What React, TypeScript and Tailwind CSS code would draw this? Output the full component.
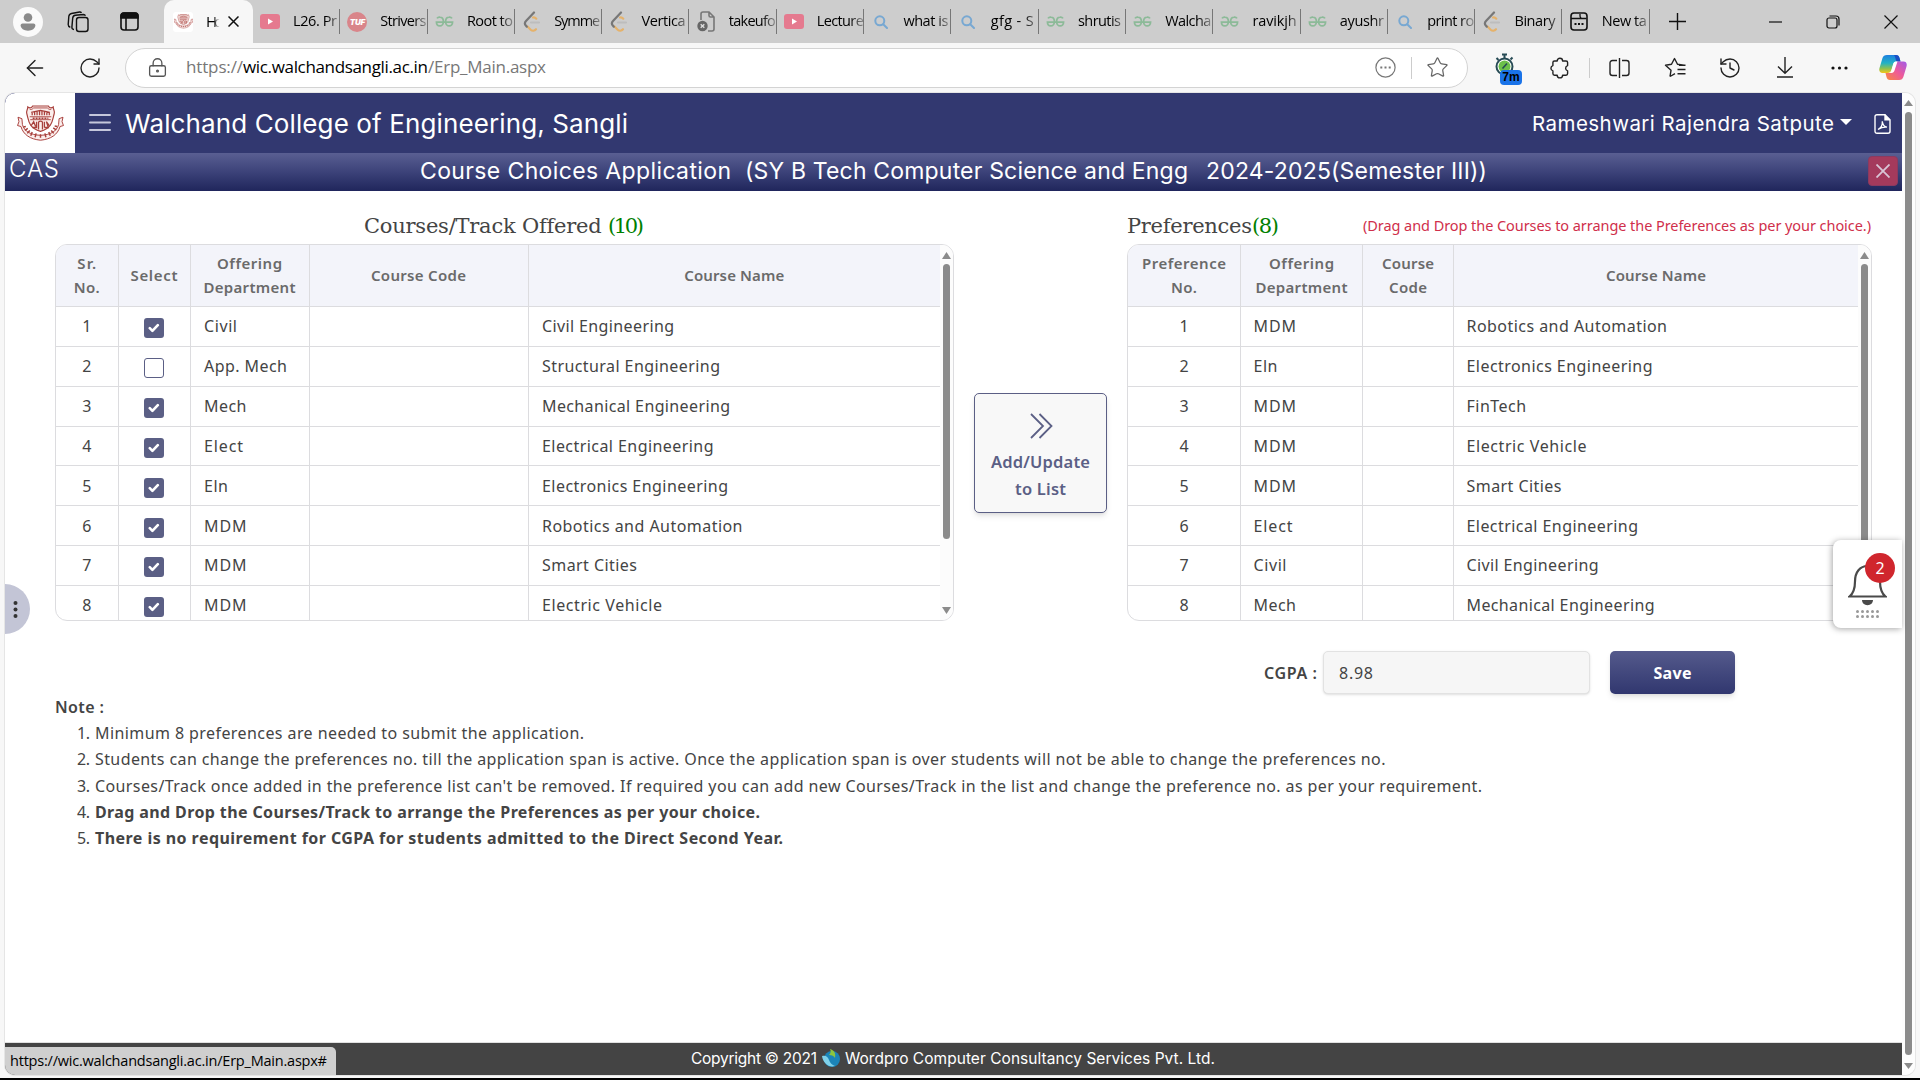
import { useLayoutEffect, useRef, useState } from "react";
import type { ReactNode } from "react";
import { ArrowLeft, RotateCw, LockKeyhole, Star, History } from "lucide-react";

/* A single line of text whose tracking is adjusted to fill a given measure. */
function Line({ w, className = "", children }: { w: number; className?: string; children: string }) {
  const ref = useRef<HTMLSpanElement>(null);
  const [tracking, setTracking] = useState(0);
  useLayoutEffect(() => {
    const el = ref.current;
    if (!el) return;
    el.style.letterSpacing = "0px";
    const natural = el.getBoundingClientRect().width;
    const next = (w - natural) / Math.max(1, children.length - 1);
    el.style.letterSpacing = `${next}px`;
    setTracking(next);
  }, [w, children]);
  return (
    <span className={`inline-block text-left whitespace-pre ${className}`} style={{ width: w }}>
      <span ref={ref} style={{ letterSpacing: tracking }}>{children}</span>
    </span>
  );
}

const SEGOE = "font-['Open_Sans','Noto_Sans',sans-serif]";
const UBUNTU = "font-['Noto_Sans',sans-serif]";
const POPPINS = "font-['Inter',sans-serif]";
const SLAB = "font-['DejaVu_Serif',serif]";

function YouTube() {
  return (
    <svg width="20" height="15" viewBox="0 0 20 15">
      <rect width="20" height="15" rx="3" fill="#e57a8f" />
      <path d="M8 4.5v6l5-3z" fill="#fff" />
    </svg>
  );
}
function Gfg() {
  return (
    <svg width="19" height="11" viewBox="0 0 20 12" fill="none" stroke="#8cba98" strokeWidth="1.9">
      <path d="M1.800 2.600C2.600 1.400 4 1 5.200 1.200 7.400 1.500 8.800 3.300 8.800 6S7 10.900 4.900 10.900 1.200 9.200 1.200 6.600h17.600c0 2.600-1.600 4.300-3.700 4.300S11.200 8.700 11.200 6s1.400-4.500 3.600-4.800c1.200-.2 2.600.2 3.400 1.400" />
    </svg>
  );
}
function LeetCode() {
  return (
    <svg width="18" height="21" viewBox="0 0 18 21" fill="none" strokeWidth="2.200" strokeLinecap="round">
      <path d="M8 11.500h8" stroke="#bdbdbd" />
      <path d="M4.500 15.500l3.200 3.200c1.700 1.500 3.800 1.200 5.300-.5M10 6.500c1.200-.4 2.300.1 3.300 1.200" stroke="#e5b26b" />
      <path d="M11 1.500L3 10c-1.300 1.400-1.300 3.400 0 4.800l.8.900" stroke="#777" />
    </svg>
  );
}
function SearchIcon() {
  return (
    <svg width="14" height="14" viewBox="0 0 14 14" fill="none" stroke="#78a8d2" strokeWidth="2" strokeLinecap="round">
      <circle cx="5.800" cy="5.800" r="4.500" />
      <path d="M9.200 9.200L13 13" />
    </svg>
  );
}
function FileX() {
  return (
    <svg width="19" height="21" viewBox="0 0 19 21" fill="none" stroke="#777" strokeWidth="1.600">
      <path d="M4 9V3c0-1.200.8-2 2-2h6l5 5v12c0 1.200-.8 2-2 2h-4M12 1v3.500C12 5.500 12.600 6 13.500 6H17" />
      <circle cx="5.500" cy="15" r="5.200" fill="#666" stroke="none" />
      <path d="M3.700 13.200l3.600 3.600m0-3.600l-3.600 3.600" stroke="#ddd" strokeWidth="1.400" />
    </svg>
  );
}
function Tuf() {
  return (
    <div className="flex size-5 items-center justify-center rounded-full bg-[#d9858a]">
      <span className="font-['Inter',sans-serif] text-[8px] font-black tracking-[-0.3px] text-white italic">TUF</span>
    </div>
  );
}
function NewTabIcon() {
  return (
    <svg width="18" height="19" viewBox="0 0 18 19" fill="none" stroke="#111" strokeWidth="1.600">
      <rect x="1" y="1" width="16" height="17" rx="3" />
      <path d="M1 6.500h15.500M10 2v1.500c0 2 .8 3 2.500 3" strokeWidth="1.300" />
      <path d="M4.500 12h2M8 12h2M11.500 12h2" strokeWidth="2" />
    </svg>
  );
}
function Crest({ size }: { size: number }) {
  return (
    <svg width={size} height={size * 0.77} viewBox="0 0 48 37" fill="none" stroke="#a8403c" strokeWidth="1.200">
      <path d="M11 2c2 1.500 4 1 5-1h16c1 2 3 2.500 5 1 0 3 2 4 1 7-2 6-1 14-14 18C11 23 12 15 10 9 9 6 11 5 11 2z" fill="#fbeeec" />
      <path d="M13 4.500c1.500.3 3-.3 4-1.500h14c1 1.200 2.500 1.800 4 1.500M13 12h22M13.500 15h21" strokeWidth=".9" />
      <path d="M15.500 10.500V7.500m2.500 3v-3m2.500 3V6.500m2.500 4v-4m2.500 4v-4m2.500 4V7m2.500 3.500v-3m2.500 3v-3M14.500 7.500l9.500-2 9.500 2" strokeWidth="1.300" />
      <path d="M16 13.500h16" strokeWidth="1.600" strokeDasharray="2 1" />
      <path d="M14.500 21l2.500-4 2 5m-3 1h4v-6m2 8v-7c0-2 4-2 4 0v7m2-2v-6m0 6h4l-2-6 3 4" strokeWidth="1.300" />
      <path d="M1 12.500l4 1.500.5 6c2 7 8 10.500 18.500 11 10.500-.5 16.500-4 18.500-11l.5-6 4-1.500-1 4.500 1.500 4-3.500 1c-2.500 8.500-9.500 13-20 14-10.500-1-17.500-5.500-20-14l-3.500-1L2 17z" fill="#fbeeec" strokeWidth="1" />
      <path d="M6.500 22.500l2.500-.5m-1 4l3-2m-.5 5l2.500-3m1 5.500l1.500-4m3 5.500l1-4m4.500 4.500v-3.500m5.500 3l-1-4m5.500 2.500l-1.500-4m5 1.500l-2.500-3m5-.5l-3-2m4-1.500l-2.500-.5" strokeWidth="1.500" />
    </svg>
  );
}
function Profile() {
  return (
    <div className="flex size-[30px] items-center justify-center rounded-full bg-[#fafafa]">
      <svg width="16" height="18" viewBox="0 0 16 18" fill="#8a8a8a">
        <circle cx="8" cy="4.500" r="4.300" />
        <path d="M2.500 10.500h11c1 0 1.800.8 1.800 1.800 0 3.200-3 5.400-7.300 5.400S.7 15.500.7 12.300c0-1 .8-1.800 1.800-1.800z" />
      </svg>
    </div>
  );
}

const TABS: { icon: ReactNode; label: string; w: number }[] = [
  { icon: <YouTube />, label: "L26. Pr", w: 44 },
  { icon: <Tuf />, label: "Strivers", w: 46 },
  { icon: <Gfg />, label: "Root to", w: 46 },
  { icon: <LeetCode />, label: "Symme", w: 46 },
  { icon: <LeetCode />, label: "Vertica", w: 44 },
  { icon: <FileX />, label: "takeufo", w: 47 },
  { icon: <YouTube />, label: "Lecture", w: 47 },
  { icon: <SearchIcon />, label: "what is", w: 45 },
  { icon: <SearchIcon />, label: "gfg - S", w: 43 },
  { icon: <Gfg />, label: "shrutis", w: 43 },
  { icon: <Gfg />, label: "Walcha", w: 46 },
  { icon: <Gfg />, label: "ravikjh", w: 44 },
  { icon: <Gfg />, label: "ayushr", w: 44 },
  { icon: <SearchIcon />, label: "print ro", w: 47 },
  { icon: <LeetCode />, label: "Binary", w: 41 },
  { icon: <NewTabIcon />, label: "New ta", w: 45 },
];

function TabStrip() {
  return (
    <div className="relative flex h-[43px] items-center bg-[#cdcdcd]">
      <div className="flex w-[164px] items-center pl-[13px]">
        <Profile />
        <svg className="ml-[24px]" width="22" height="22" viewBox="0 0 22 22" fill="none" stroke="#111" strokeWidth="1.400">
          <rect x="9.500" y="6.500" width="11.500" height="14" rx="2.500" />
          <path d="M7 18.500c-1.400-.1-2.200-1-2.100-2.400l.8-9C5.900 5.500 6.800 4.500 8.300 4.300l8.200-.8c1 0 1.600.4 1.900 1.200" />
          <path d="M3.300 16.200C2 15.900 1.200 15 1.200 13.500l.6-8c.2-1.700 1-2.700 2.700-3L12.500 1c.9-.1 1.600.2 1.900 1" />
        </svg>
        <svg className="ml-[31px]" width="19" height="19" viewBox="0 0 19 19" fill="none" stroke="#111" strokeWidth="1.600">
          <rect x="1" y="1" width="17" height="17" rx="3" />
          <path d="M1 6V4a3 3 0 013-3h11a3 3 0 013 3v2z" fill="#111" />
          <path d="M6 6v12" />
        </svg>
      </div>
      <div className="flex h-[43px] w-[89px] items-center rounded-t-[10px] bg-[#f7f7f7] pl-[9px]">
        <div className="flex size-[20px] items-center justify-center rounded-[3px] bg-white"><Crest size={19} /></div>
        <div className={`-mt-[2px] ml-[13px] w-[17px] text-[15px] leading-[22px] text-black mask-r-from-45% mask-r-to-80% ${SEGOE}`}><Line w={17}>Ho</Line></div>
        <svg className="ml-[5px]" width="11" height="11" viewBox="0 0 11 11" stroke="#111" strokeWidth="1.500"><path d="M.5.5l10 10m0-10l-10 10" /></svg>
      </div>
      {TABS.map((t, i) => (
        <div key={i} className="flex h-[25px] w-[87.300px] items-center border-r border-[#777] pl-[7px]">
          <div className="flex w-[20px] items-center justify-center">{t.icon}</div>
          <div className={`-mt-[2px] ml-[13px] w-[47px] shrink-0 text-[14.500px] leading-[24px] text-black mask-r-from-70% mask-r-to-110% ${SEGOE}`}>
            <Line w={t.w}>{t.label}</Line>
          </div>
        </div>
      ))}
      <svg className="ml-[19px]" width="17" height="17" viewBox="0 0 17 17" stroke="#111" strokeWidth="1.400"><path d="M8.500 0v17M0 8.500h17" /></svg>
      <div className="ml-auto flex items-center pr-[22px]">
        <svg width="13" height="2" viewBox="0 0 13 2"><path d="M0 1h13" stroke="#111" strokeWidth="1.200" /></svg>
        <svg className="ml-[44px]" width="14" height="14" viewBox="0 0 14 14" fill="none" stroke="#111" strokeWidth="1.200">
          <rect x="1" y="3" width="10" height="10" rx="2" />
          <path d="M3.500 1H10c1.700 0 3 1.300 3 3v6.500" />
        </svg>
        <svg className="ml-[44px]" width="14" height="14" viewBox="0 0 14 14" stroke="#111" strokeWidth="1.200"><path d="M.5.5l13 13m0-13l-13 13" /></svg>
      </div>
    </div>
  );
}

function Copilot() {
  return (
    <svg width="28" height="27" viewBox="0 0 28 27">
      <defs>
        <linearGradient id="cpA" x1="0" y1="0" x2="0" y2="1">
          <stop offset="0" stopColor="#1d7fe0" /><stop offset=".45" stopColor="#22b2c5" /><stop offset=".75" stopColor="#8cc152" /><stop offset="1" stopColor="#f5c518" />
        </linearGradient>
        <linearGradient id="cpB" x1="1" y1="0" x2="0" y2="1">
          <stop offset="0" stopColor="#a05be8" /><stop offset=".5" stopColor="#ee5a9a" /><stop offset="1" stopColor="#f98a3c" />
        </linearGradient>
      </defs>
      <path d="M8 1h9c2 0 3 1 3.500 3l1 3.500h-4c-2 0-3 1-3.500 3l-1.500 5c-.6 2.300-1.500 3.500-4 3.500H3.500C.8 19-.3 17 .5 14L3.500 4C4.200 2 5.500 1 8 1z" fill="url(#cpA)" />
      <path d="M15 1h2c2 0 3 1 3.500 3l1 3.500h-4c-1-2-1-4.500-2.500-6.500z" fill="#1b4fc4" />
      <path d="M20 26h-9c-2 0-3-1-3.500-3l-1-4h3c2.500 0 3.400-1.200 4-3.500l1.500-5c.5-2 1.500-3 3.500-3h6c2.700 0 3.800 2 3 5l-3 10c-.7 2.500-2 3.500-4.500 3.500z" fill="url(#cpB)" />
      <path d="M12.500 16.500l2-7c.4-1.300 1.200-2 2.500-2h1.500l-3 9c-.5 1.500-1.500 2.500-3 2.500H9.500c1.800-.2 2.500-1 3-2.500z" fill="#fff" />
    </svg>
  );
}

function Toolbar() {
  return (
    <div className="flex h-[50px] items-center bg-[#f7f7f7] pb-[1px]">
      <ArrowLeft className="ml-[22px]" size={26} strokeWidth={1.300} color="#222" />
      <RotateCw className="ml-[30px]" size={24} strokeWidth={1.400} color="#222" />
      <div className="ml-[23px] flex h-[40px] w-[1343px] items-center rounded-full border border-[#d3d3d3] bg-white">
        <LockKeyhole className="ml-[21px]" size={21} strokeWidth={1.500} color="#555" />
        <div className={`-mt-[1px] ml-[18px] flex text-[17px] leading-[24px] ${SEGOE}`}>
          <Line w={57} className="text-[#777]">https://</Line>
          <Line w={185} className="text-black">wic.walchandsangli.ac.in</Line>
          <Line w={118} className="text-[#777]">/Erp_Main.aspx</Line>
        </div>
        <svg className="ml-auto" width="21" height="21" viewBox="0 0 21 21" fill="none" stroke="#777" strokeWidth="1.200">
          <circle cx="10.500" cy="10.500" r="9.600" />
          <path d="M5.300 10.500h2m2.200 0h2m2.200 0h2" strokeWidth="2" />
        </svg>
        <div className="ml-[15px] h-[22px] w-px bg-[#ccc]" />
        <Star className="mr-[18px] ml-[14px]" size={23} strokeWidth={1.300} color="#666" />
      </div>
      <div className="relative ml-[26px] h-[30px] w-[28px]">
        <svg width="22" height="24" viewBox="0 0 22 24" fill="none" stroke="#274b55" strokeWidth="2">
          <circle cx="10.500" cy="13.500" r="8" fill="#fff" />
          <circle cx="10.500" cy="13.500" r="6" fill="#6cc04a" stroke="none" />
          <path d="M8 1.500h5M10.500 2v3M2.500 5l2 2m12-.5l2-2" />
          <path d="M8.500 15.500l4.500-5" strokeWidth="1.600" />
        </svg>
        <div className="absolute top-[17px] left-[6px] flex h-[15px] w-[22px] items-center justify-center rounded-[4px] bg-[#1a73e8] font-['Liberation_Sans',sans-serif] text-[12px] font-bold text-black">7m</div>
      </div>
      <svg className="ml-[27px]" width="22" height="22" viewBox="0 0 22 22" fill="none" stroke="#222" strokeWidth="1.400" strokeLinejoin="round">
        <path d="M8.200 4a2.700 2.700 0 015.400 0H17c1 0 1.600.6 1.600 1.600V8.600a2.700 2.700 0 000 5.200v2.800c0 1-.6 1.600-1.600 1.600h-3.400a2.700 2.700 0 01-5.400 0H5.500c-1 0-1.600-.6-1.600-1.600v-2.800a2.700 2.700 0 010-5.200v-3C3.900 4.600 4.500 4 5.500 4z" />
      </svg>
      <div className="ml-[18px] h-[20px] w-px bg-[#ccc]" />
      <svg className="ml-[19px]" width="21" height="20" viewBox="0 0 21 20" fill="none" stroke="#222" strokeWidth="1.400">
        <path d="M8 2.500H3.500C2 2.500 1 3.500 1 5v10c0 1.500 1 2.500 2.500 2.500H8M13 2.500h4.500C19 2.500 20 3.500 20 5v10c0 1.500-1 2.500-2.500 2.500H13M10.500 0v20" />
      </svg>
      <svg className="ml-[34px]" width="22" height="21" viewBox="0 0 22 21" fill="none" stroke="#222" strokeWidth="1.400" strokeLinejoin="round">
        <path d="M6 19.500l1-6.200L1.500 8.200l6-.9L10.500 1.500l3 5.800 6.500.9M13.500 12.500h8M15 8.200h6.500M13.500 16.800h8M6 19.500l5-2.800" />
      </svg>
      <History className="ml-[32px]" size={24} strokeWidth={1.400} color="#222" />
      <svg className="ml-[35px]" width="16" height="21" viewBox="0 0 16 21" fill="none" stroke="#222" strokeWidth="1.400"><path d="M8 0v16M1 9.500L8 16.200l7-6.700M0 20h16" /></svg>
      <svg className="ml-[38px]" width="17" height="4" viewBox="0 0 17 4" fill="#111"><circle cx="2" cy="2" r="1.600" /><circle cx="8.500" cy="2" r="1.600" /><circle cx="15" cy="2" r="1.600" /></svg>
      <div className="ml-[31px]"><Copilot /></div>
    </div>
  );
}

const HEAD = `flex flex-col items-center justify-center border-r border-[#dcdcdf] pb-[2px] leading-[24px] text-[15px] font-semibold text-[#6a6a6a] ${UBUNTU}`;
const CELL = "flex items-center border-r border-[#dcdcdf]";

const OFFERED: [string, number, string, number, boolean][] = [
  ["Civil", 33, "Civil Engineering", 132, true],
  ["App. Mech", 83, "Structural Engineering", 178, false],
  ["Mech", 42.5, "Mechanical Engineering", 188, true],
  ["Elect", 39, "Electrical Engineering", 171.5, true],
  ["Eln", 24, "Electronics Engineering", 186, true],
  ["MDM", 42.5, "Robotics and Automation", 200.5, true],
  ["MDM", 42.5, "Smart Cities", 95, true],
  ["MDM", 42.5, "Electric Vehicle", 120, true],
];
const PREFS: [string, number, string, number][] = [
  ["MDM", 42.5, "Robotics and Automation", 200.5],
  ["Eln", 24, "Electronics Engineering", 186],
  ["MDM", 42.5, "FinTech", 59.6],
  ["MDM", 42.5, "Electric Vehicle", 120],
  ["MDM", 42.5, "Smart Cities", 95],
  ["Elect", 39, "Electrical Engineering", 171.5],
  ["Civil", 33, "Civil Engineering", 132],
  ["Mech", 42.5, "Mechanical Engineering", 188],
];

function Scroll({ thumb }: { thumb: string }) {
  return (
    <div className="flex w-[13px] shrink-0 flex-col items-center bg-[#fcfcfc] pt-[7px]">
      <svg width="9" height="7" viewBox="0 0 9 7" fill="#8b8b8b"><path d="M4.500 0L9 7H0z" /></svg>
      <div className={`mt-[5px] w-[7px] rounded-full bg-[#8b8b8b] ${thumb}`} />
      <svg className="mt-auto mb-[6px]" width="9" height="7" viewBox="0 0 9 7" fill="#8b8b8b"><path d="M4.500 7L9 0H0z" /></svg>
    </div>
  );
}

function OfferedTable() {
  const cols = "grid grid-cols-[62.500px_72px_119px_219px_1fr]";
  return (
    <div className="flex h-[377px] w-[899px] overflow-hidden rounded-[12px] border border-[#dcdcdf] bg-white">
      <div className="flex-1">
        <div className={`${cols} h-[62px] border-b border-[#dcdcdf] bg-[#f3f4fa]`}>
          <div className={HEAD}><Line w={19}>Sr.</Line><Line w={26}>No.</Line></div>
          <div className={HEAD}><Line w={47}>Select</Line></div>
          <div className={HEAD}><Line w={65}>Offering</Line><Line w={92}>Department</Line></div>
          <div className={HEAD}><Line w={95}>Course Code</Line></div>
          <div className={`${HEAD} border-r-0`}><Line w={100}>Course Name</Line></div>
        </div>
        {OFFERED.map(([d, dw, n, nw, on], i) => (
          <div key={i} className={`${cols} h-[39.850px] border-b border-[#dcdcdf] text-[16px] text-[#444] ${UBUNTU}`}>
            <div className={`${CELL} justify-center`}>{i + 1}</div>
            <div className={`${CELL} justify-center pt-[4px]`}>
              {on ? (
                <div className="flex size-[20px] items-center justify-center rounded-[3px] bg-[#5b5f85]">
                  <svg width="12" height="10" viewBox="0 0 12 10" fill="none" stroke="#fff" strokeWidth="2.600" strokeLinecap="round" strokeLinejoin="round"><path d="M1.800 5.200l2.600 2.600 5.400-5.600" /></svg>
                </div>
              ) : (
                <div className="size-[20px] rounded-[3px] border border-[#5b5f85] bg-white" />
              )}
            </div>
            <div className={`${CELL} pl-[13.500px]`}><Line w={dw}>{d}</Line></div>
            <div className={CELL} />
            <div className="flex items-center pl-[13.500px]"><Line w={nw}>{n}</Line></div>
          </div>
        ))}
      </div>
      <Scroll thumb="h-[275px]" />
    </div>
  );
}

function PreferenceTable() {
  const cols = "grid grid-cols-[113px_122px_91px_1fr]";
  return (
    <div className="flex h-[377px] w-[745px] overflow-hidden rounded-[12px] border border-[#dcdcdf] bg-white">
      <div className="flex-1">
        <div className={`${cols} h-[62px] border-b border-[#dcdcdf] bg-[#f3f4fa]`}>
          <div className={HEAD}><Line w={84}>Preference</Line><Line w={26}>No.</Line></div>
          <div className={HEAD}><Line w={65}>Offering</Line><Line w={92}>Department</Line></div>
          <div className={HEAD}><Line w={52}>Course</Line><Line w={38}>Code</Line></div>
          <div className={`${HEAD} border-r-0`}><Line w={100}>Course Name</Line></div>
        </div>
        {PREFS.map(([d, dw, n, nw], i) => (
          <div key={i} className={`${cols} h-[39.850px] border-b border-[#dcdcdf] text-[16px] text-[#444] ${UBUNTU}`}>
            <div className={`${CELL} justify-center`}>{i + 1}</div>
            <div className={`${CELL} pl-[12.500px]`}><Line w={dw}>{d}</Line></div>
            <div className={CELL} />
            <div className="flex items-center pl-[12.500px]"><Line w={nw}>{n}</Line></div>
          </div>
        ))}
      </div>
      <Scroll thumb="h-[342px]" />
    </div>
  );
}

const NOTES: [string, number, boolean][] = [
  ["Minimum 8 preferences are needed to submit the application.", 489, false],
  ["Students can change the preferences no. till the application span is active. Once the application span is over students will not be able to change the preferences no.", 1290.5, false],
  ["Courses/Track once added in the preference list can't be removed. If required you can add new Courses/Track in the list and change the preference no. as per your requirement.", 1387, false],
  ["Drag and Drop the Courses/Track to arrange the Preferences as per your choice.", 665, true],
  ["There is no requirement for CGPA for students admitted to the Direct Second Year.", 688, true],
];

function Header() {
  return (
    <>
      <div className="flex h-[60px] items-center bg-[#323870]">
        <div className="flex h-[60px] w-[70px] items-center justify-center rounded-tl-[10px] bg-white"><Crest size={47} /></div>
        <svg className="ml-[14px]" width="22" height="20" viewBox="0 0 22 20" stroke="#c5c7dc" strokeWidth="2" strokeLinecap="round"><path d="M1 2h20M1 9.500h20M1 17h20" /></svg>
        <div className={`mt-[2px] ml-[14px] text-[26px] leading-[40px] text-white ${POPPINS}`}><Line w={503}>Walchand College of Engineering, Sangli</Line></div>
        <div className={`mt-[2px] ml-auto text-[20.500px] leading-[30px] text-white ${POPPINS}`}><Line w={302}>Rameshwari Rajendra Satpute</Line></div>
        <svg className="mr-[22px] ml-[6px] -mt-[2px]" width="12" height="6" viewBox="0 0 12 6" fill="#fff"><path d="M0 0h12L6 6z" /></svg>
        <svg className="mr-[11px] mt-[2px]" width="17" height="20" viewBox="0 0 17 20" fill="none" stroke="#fff" strokeWidth="1.400">
          <path d="M3 .8h8l5 5v11.400c0 1.200-.8 2-2 2H3c-1.200 0-2-.8-2-2V2.800c0-1.200.8-2 2-2z" />
          <path d="M11 .8v5h5" fill="#fff" />
          <path d="M4 15.500c3-1.600 4.600-5 4.300-8.300.3 3.300 1.900 5.500 4.700 6-3.300-.4-6 .4-9 2.300z" strokeWidth="1.300" />
        </svg>
      </div>
      <div className="flex h-[38px] bg-linear-to-b from-[#5a5f92] via-[#3c4279] to-[#20265c] text-white">
        <div className={`ml-[4px] w-[409px] text-[24px] leading-[31px] font-light ${POPPINS}`}><Line w={50}>CAS</Line></div>
        <div className={`flex text-[23px] leading-[37px] ${POPPINS}`}>
          <Line w={311} className="ml-[2px]">Course Choices Application</Line>
          <Line w={443} className="ml-[14px]">(SY B Tech Computer Science and Engg</Line>
          <Line w={281} className="ml-[18px]">2024-2025(Semester III))</Line>
        </div>
        <div className="mt-[3px] mr-[4px] ml-auto flex size-[30px] items-center justify-center rounded-[4px] border border-[#8c3a60] bg-[#a43a5c]">
          <svg width="14" height="14" viewBox="0 0 14 14" stroke="#d9c6d6" strokeWidth="1.800"><path d="M.5.5l13 13m0-13l-13 13" /></svg>
        </div>
      </div>
    </>
  );
}

export default function App() {
  return (
    <div className="flex h-[1080px] w-[1920px] flex-col overflow-hidden border-b-2 border-black bg-[#f7f7f7]">
      <TabStrip />
      <Toolbar />
      <div className="relative ml-[5px] flex h-[982px] w-[1910px] overflow-hidden rounded-[10px] bg-white shadow-[0_0_0_1px_#e5e5e5]">
        <div className="flex w-[1897px] flex-col">
          <Header />
          <div className="flex h-[53px] pt-[18px]">
            <div className={`ml-[359px] flex w-[763px] text-[21px] leading-[34px] text-[#444] ${SLAB}`}>
              <Line w={237}>Courses/Track Offered</Line>
              <Line w={36} className="ml-[7px] text-[#008000]">(10)</Line>
            </div>
            <div className={`flex w-[236px] text-[21px] leading-[34px] text-[#444] ${SLAB}`}>
              <Line w={125}>Preferences</Line>
              <Line w={27} className="text-[#008000]">(8)</Line>
            </div>
            <div className={`text-[14.500px] leading-[32px] text-[#d02f4b] ${UBUNTU}`}><Line w={508}>(Drag and Drop the Courses to arrange the Preferences as per your choice.)</Line></div>
          </div>
          <div className="flex pl-[50px]">
            <OfferedTable />
            <button className={`mt-[149px] ml-[20px] flex h-[120px] w-[133px] flex-col items-center rounded-[5px] border border-[#5b5f85] bg-[#f8f8f8] pt-[19px] text-[16.500px] leading-[27px] font-semibold text-[#5b5f85] shadow-md ${UBUNTU}`}>
              <svg className="mb-[9px] ml-[2px]" width="23" height="26" viewBox="0 0 23 26" fill="none" stroke="#5b5f85" strokeWidth="1.800"><path d="M1 1l12 12L1 25M9.500 1l12 12-12 12" /></svg>
              <Line w={99}>Add/Update</Line>
              <Line w={51}>to List</Line>
            </button>
            <div className="ml-[20px]"><PreferenceTable /></div>
          </div>
          <div className={`mt-[30px] flex h-[43px] items-center text-[16px] text-[#444] ${UBUNTU}`}>
            <Line w={53} className="ml-[1259px] font-semibold">CGPA :</Line>
            <div className="ml-[6px] flex h-[43px] w-[267px] items-center rounded-[5px] border border-[#e2e2e2] bg-[#f6f6f6] pl-[15px] shadow-sm"><Line w={34}>8.98</Line></div>
            <button className="ml-[20px] h-[43px] w-[125px] rounded-[5px] bg-linear-to-b from-[#555a8c] to-[#31376f] font-bold text-white shadow-md"><Line w={38}>Save</Line></button>
          </div>
          <div className={`text-[16px] text-[#444] ${UBUNTU}`}>
            <div className="ml-[50px] leading-[26px]"><Line w={49} className="font-semibold">Note :</Line></div>
            {NOTES.map(([t, w, bold], i) => (
              <div key={i} className="flex h-[26.300px] items-center pl-[72px]">
                <Line w={13}>{`${i + 1}.`}</Line>
                <Line w={w} className={bold ? "ml-[5px] font-bold" : "ml-[5px]"}>{t}</Line>
              </div>
            ))}
          </div>
          <div className={`mt-auto flex h-[33px] items-center border-t border-[#e0e0e0] bg-[#444] text-[15.500px] text-white ${POPPINS}`}>
            <Line w={126} className="ml-[686px]">Copyright © 2021</Line>
            <svg className="-mt-[2px] ml-[4px]" width="20" height="20" viewBox="0 0 20 20">
              <circle cx="11" cy="11" r="8" fill="#1b84b8" />
              <path d="M1 8c4-1 6 1 7 4s3 5 6 6C8 20 2 15 1 8z" fill="#7fd0e8" />
              <path d="M9 1c4 1 6 4 5 9-1-2-3-3-6-3 2-2 2-4 1-6z" fill="#8cc63f" />
            </svg>
            <Line w={370} className="ml-[4px]">Wordpro Computer Consultancy Services Pvt. Ltd.</Line>
          </div>
        </div>
        <div className="flex w-[13px] flex-col items-center bg-[#fdfdfd] pt-[7px]">
          <svg width="9" height="6" viewBox="0 0 9 6" fill="#8b8b8b"><path d="M4.500 0L9 6H0z" /></svg>
          <div className="mt-[6px] h-[943px] w-[7px] rounded-full bg-[#8b8b8b]" />
          <svg className="mt-[8px]" width="9" height="6" viewBox="0 0 9 6" fill="#8b8b8b"><path d="M4.500 6L9 0H0z" /></svg>
        </div>

        <div className="absolute top-[491px] left-0 flex h-[50px] w-[25px] items-center rounded-r-full bg-[#c3c5d6] pl-[8px]">
          <svg width="5" height="17" viewBox="0 0 5 17" fill="#333"><circle cx="2.500" cy="2" r="2" /><circle cx="2.500" cy="8.500" r="2" /><circle cx="2.500" cy="15" r="2" /></svg>
        </div>
        <div className="absolute top-[447px] left-[1828px] h-[88px] w-[69px] rounded-l-[8px] bg-white shadow-[-1px_1px_6px_rgba(0,0,0,0.35)]">
          <svg className="absolute top-[24px] left-[15px]" width="39" height="42" viewBox="0 0 39 42" fill="none" stroke="#4a4a4a" strokeWidth="2.200">
            <path d="M1.500 32.500c5-4 5.500-10 5.500-15C7 8 12 2 19.500 2S32 8 32 17.500c0 5 .5 11 5.500 15z" />
            <path d="M14 36h11c0 3-2.300 5.200-5.500 5.200S14 39 14 36z" fill="#4a4a4a" stroke="none" />
          </svg>
          <div className="absolute top-[13px] left-[32px] flex size-[30px] items-center justify-center rounded-full bg-[#d0262d] font-['Noto_Sans',sans-serif] text-[16px] text-white">2</div>
          <div className="absolute top-[70px] left-[23px] grid grid-cols-5 gap-[2px]">
            {Array.from({ length: 10 }, (_, i) => <div key={i} className="size-[3px] rounded-full bg-[#999]" />)}
          </div>
        </div>
        <div className={`absolute bottom-0 left-0 flex h-[28px] w-[331px] items-center rounded-tr-[5px] bg-[#cfcfcf] pl-[5px] text-[14.500px] text-black ${SEGOE}`}>
          <Line w={317}>https://wic.walchandsangli.ac.in/Erp_Main.aspx#</Line>
        </div>
      </div>
    </div>
  );
}
